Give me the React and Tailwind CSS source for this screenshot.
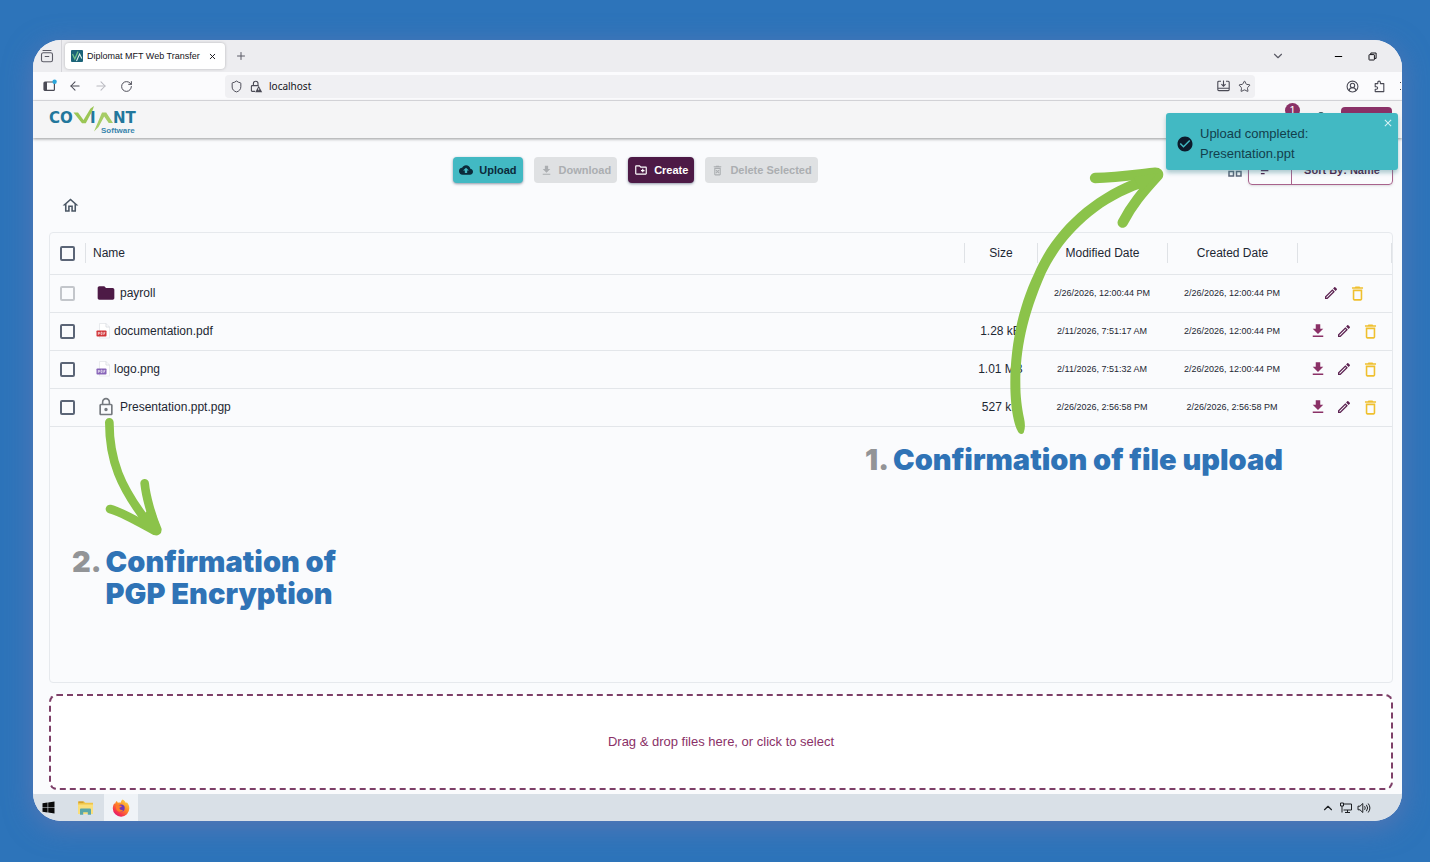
import React from "react";
import {
  MdCloudUpload,
  MdFileDownload,
  MdOutlineCreateNewFolder,
  MdOutlineDeleteForever,
  MdOutlineHome,
  MdOutlineEdit,
  MdDeleteOutline,
  MdLockOutline,
  MdFolder,
  MdCheckCircle,
  MdClose,
  MdGridView,
  MdSort,
  MdPerson,
  MdNotifications,
} from "react-icons/md";
import {
  ArrowLeft,
  ArrowRight,
  ChevronDown,
  ChevronUp,
  CircleUserRound,
  Minus,
  Plus,
  RotateCw,
  Shield,
  Star,
  X,
} from "lucide-react";

const files = [
  {
    name: "payroll",
    type: "folder",
    size: "",
    modified: "2/26/2026, 12:00:44 PM",
    created: "2/26/2026, 12:00:44 PM",
  },
  {
    name: "documentation.pdf",
    type: "pdf",
    size: "1.28 kB",
    modified: "2/11/2026, 7:51:17 AM",
    created: "2/26/2026, 12:00:44 PM",
  },
  {
    name: "logo.png",
    type: "png",
    size: "1.01 MB",
    modified: "2/11/2026, 7:51:32 AM",
    created: "2/26/2026, 12:00:44 PM",
  },
  {
    name: "Presentation.ppt.pgp",
    type: "pgp",
    size: "527 kB",
    modified: "2/26/2026, 2:56:58 PM",
    created: "2/26/2026, 2:56:58 PM",
  },
];

function TabBar() {
  return (
    <div className="flex h-8 items-center bg-[#ededf0] text-[#5b5b66]">
      <button aria-label="Recent tabs" className="flex h-8 w-[29px] items-center justify-center border-r border-[#d5d5da]">
        <svg width="14" height="14" viewBox="0 0 14 14" fill="none" stroke="currentColor" strokeWidth="1.1">
          <path d="M3 1.5h8" strokeLinecap="round" />
          <rect x="1.5" y="3.8" width="11" height="9" rx="1.8" />
          <path d="M5.2 7.5h3.6" strokeLinecap="round" />
        </svg>
      </button>
      <div className="ml-[3px] flex h-[26px] w-40 items-center rounded bg-white pl-1.5 pr-2 shadow-[0_0_3px_rgba(0,0,0,0.25)]">
        <svg width="12" height="12" viewBox="0 0 12 12" className="mr-1 shrink-0">
          <rect width="12" height="12" rx="1" fill="#1b6378" />
          <path d="M1.5 4l2.3 5L7 1.5" fill="none" stroke="#6fc08a" strokeWidth="1.3" />
          <path d="M5.5 11L8.6 4l2.2 4.5" fill="none" stroke="#d8efe6" strokeWidth="1.1" />
        </svg>
        <span className="flex-1 whitespace-nowrap text-[9px] leading-4 text-[#15141a]">
          Diplomat MFT Web Transfer
        </span>
        <button aria-label="Close tab">
          <X size={9} strokeWidth={2.5} className="text-[#15141a]" />
        </button>
      </div>
      <button aria-label="New tab" className="ml-2.5">
        <Plus size={12} strokeWidth={2} />
      </button>
      <button aria-label="List all tabs" className="ml-auto">
        <ChevronDown size={14} strokeWidth={2} />
      </button>
      <button aria-label="Minimize" className="ml-12">
        <Minus size={11} strokeWidth={2.4} className="text-black" />
      </button>
      <button aria-label="Restore" className="ml-6 mr-[25px]">
        <svg width="9" height="9" viewBox="0 0 9 9" fill="none" stroke="#15141a" strokeWidth="1">
          <rect x="1" y="2.6" width="5.4" height="5.4" rx="0.5" />
          <path d="M2.8 2.4V1h5.3v5.4H6.6" />
        </svg>
      </button>
    </div>
  );
}

function AddressBar() {
  return (
    <div className="flex h-[29px] items-center border-b border-[#e2e2e6] bg-[#fbfbfd] pl-2.5 text-[#4a4a55]">
      <button aria-label="Sidebar">
        <svg width="14" height="14" viewBox="0 0 14 14" fill="none">
          <rect x="1" y="3" width="10.4" height="8.4" rx="1" stroke="currentColor" strokeWidth="1.2" />
          <rect x="1" y="3" width="3" height="8.4" fill="currentColor" />
          <circle cx="11.6" cy="2.8" r="2.2" fill="#2ba7dc" />
        </svg>
      </button>
      <button aria-label="Back" className="ml-[11px]">
        <ArrowLeft size={14} strokeWidth={1.8} />
      </button>
      <button aria-label="Forward" className="ml-3 text-[#b9b9c0]" disabled>
        <ArrowRight size={14} strokeWidth={1.8} />
      </button>
      <button aria-label="Reload" className="ml-3">
        <RotateCw size={13} strokeWidth={1.8} />
      </button>
      <div className="ml-[92px] flex h-[23px] flex-1 items-center rounded bg-[#f0f0f3] pl-[5px] pr-1">
        <Shield size={13} strokeWidth={1.8} />
        <svg width="13" height="13" viewBox="0 0 13 13" fill="none" className="ml-[7px]">
          <path d="M3.4 5.6V3.6a2.3 2.3 0 014.6 0v2" stroke="currentColor" strokeWidth="1.1" />
          <path d="M5 11.4H2.2a.8.8 0 01-.8-.8V6.4c0-.4.4-.8.8-.8h6.4" stroke="currentColor" strokeWidth="1.1" />
          <path d="M8.7 5.8l3.5 6.4H5.2z" fill="currentColor" />
          <path d="M8.7 8.2v2" stroke="#f0f0f3" strokeWidth="0.9" />
        </svg>
        <input
          aria-label="Address"
          defaultValue="localhost"
          className="ml-1.5 min-w-0 flex-1 bg-transparent font-['Noto_Sans',sans-serif] text-[10px] text-[#15141a] outline-none"
        />
        <button aria-label="Install app">
          <svg width="13" height="12" viewBox="0 0 13 12" fill="none" stroke="currentColor" strokeWidth="1.1">
            <path d="M4 1.2H1.8a1 1 0 00-1 1v7.4a1 1 0 001 1h9.4a1 1 0 001-1V2.2a1 1 0 00-1-1H9" />
            <path d="M6.5.5v5.6M4.4 4.2l2.1 2 2.1-2M1 8.3h11" />
          </svg>
        </button>
        <button aria-label="Bookmark" className="ml-2">
          <Star size={13} strokeWidth={1.8} />
        </button>
      </div>
      <button aria-label="Account" className="ml-[91px]">
        <CircleUserRound size={13} strokeWidth={2} />
      </button>
      <button aria-label="Extensions" className="ml-3.5">
        <svg width="13" height="13" viewBox="0 0 13 13" fill="none" stroke="currentColor" strokeWidth="1.1" strokeLinejoin="round">
          <path d="M2.2 3.6h2.6V2.4a1.3 1.3 0 012.6 0v1.2h3.4v8H2.2V9.2h1.2a1.2 1.2 0 000-2.5H2.2z" />
        </svg>
      </button>
      <button aria-label="Menu" className="ml-3.5 mr-px h-2 w-px border-y border-[#4a4a55]" />
    </div>
  );
}

function Logo() {
  return (
    <svg width="89" height="28" viewBox="0 0 89 28" role="img" aria-label="Coviant Software">
      <g fill="#22779c" fontFamily="'DejaVu Sans', sans-serif" fontWeight="700" fontSize="15">
        <text x="0" y="17">CO</text>
        <text x="41" y="17">I</text>
        <text x="64" y="17">NT</text>
      </g>
      <text x="52" y="27" fill="#3a86ad" fontFamily="'Liberation Sans', sans-serif" fontWeight="700" fontSize="8">
        Software
      </text>
      <path d="M24.500 6.500h4.500l5.500 7.500L41.500 2.500 45 0 43.500 4.500 36.800 17.300h-3.800z" fill="#9bc655" />
      <path d="M45 25.500L53 6.600h4.200L64 17h-4.300L55.200 10.500 49.500 21z" fill="#a6cc66" />
    </svg>
  );
}

function AppHeader() {
  return (
    <header className="flex h-[37px] items-center bg-[#f5f5f6] pl-4 pr-2.5 shadow-[0_1px_3px_rgba(0,0,0,0.4)]">
      <Logo />
      <button aria-label="Notifications" className="relative ml-auto text-[#4d1a46]">
        <MdNotifications size={18} />
        <span className="absolute -top-2 left-2 flex h-[15px] w-[15px] items-center justify-center rounded-full bg-[#8a3167] text-[11px] text-white">
          1
        </span>
      </button>
      <button aria-label="Profile" className="ml-3.5 text-[#38565f]">
        <MdPerson size={24} />
      </button>
      <button className="ml-2 h-[26px] w-[51px] rounded bg-[#8a3167] text-[11px] font-bold text-white">
        Logout
      </button>
    </header>
  );
}

function Toolbar() {
  return (
    <div className="flex items-center">
      <div className="flex flex-1 justify-center gap-[11px] text-[11px] font-bold">
        <button className="flex h-[26px] items-center gap-1.5 rounded bg-[#42b9c3] px-1.5 text-[#0b2a3a] shadow-sm shadow-gray-400">
          <MdCloudUpload size={14} />
          Upload
        </button>
        <button disabled className="flex h-[26px] items-center gap-1.5 rounded bg-[#dfe1e3] px-1.5 text-[#abaeb1]">
          <MdFileDownload size={13} />
          Download
        </button>
        <button className="flex h-[26px] items-center gap-1.5 rounded bg-[#4d1a46] px-1.5 text-white shadow-sm shadow-gray-400">
          <MdOutlineCreateNewFolder size={14} />
          Create
        </button>
        <button disabled className="flex h-[26px] items-center gap-1.5 rounded bg-[#dfe1e3] px-1.5 text-[#abaeb1]">
          <MdOutlineDeleteForever size={13} />
          Delete Selected
        </button>
      </div>
      <button aria-label="Grid view" className="ml-1 mr-1 text-[#5b6577]">
        <MdGridView size={18} />
      </button>
      <div className="flex h-[30px] rounded border border-[#a8628c] text-[11px] font-bold text-[#4d1a46] shadow-sm">
        <button aria-label="Sort direction" className="flex w-[43px] items-center justify-center border-r border-[#a8628c] pr-2">
          <MdSort size={15} />
        </button>
        <button className="w-[100px]">Sort By: Name</button>
      </div>
    </div>
  );
}

function FileIcon({ type }) {
  if (type === "folder") return <MdFolder size={20} className="mr-1 text-[#4d1a46]" />;
  if (type === "pgp") return <MdLockOutline size={20} className="mr-1 text-[#75797f]" />;
  return (
    <svg width="15" height="16" viewBox="0 0 15 16" className="mr-[3px]">
      <path d="M3.500.5h6.500l3.500 3.500v11h-10z" fill="#fff" stroke="#e3e6ea" strokeWidth="0.800" />
      <path d="M10 .5v3.500h3.500" fill="none" stroke="#d5d9de" strokeWidth="0.800" />
      <rect x="0.500" y="7.500" width="10" height="6" rx="0.800" fill={type === "pdf" ? "#d13438" : "#8764b8"} />
      <path d="M2.300 9.200v2.700M2.300 9.500h1.300v1.200H2.300M5 9.200h1.100v2.400H5zM7.800 12V9.400h1.500M7.800 10.600h1.200" fill="none" stroke="#fff" strokeWidth="0.600" />
    </svg>
  );
}

const checkboxClass =
  "block h-[15px] w-[15px] appearance-none rounded-xs border-2 border-[#5b6577] checked:bg-[#4d1a46] disabled:border-[#c3c6cb]";

function FileTable() {
  return (
    <div className="flex-1 rounded border border-[#e6e9ed]">
      <table className="w-full table-fixed text-[12px] text-[#1d2733]">
        <colgroup>
          <col className="w-[35px]" />
          <col />
          <col className="w-[73px]" />
          <col className="w-[130px]" />
          <col className="w-[130px]" />
          <col className="w-[95px]" />
        </colgroup>
        <thead>
          <tr className="h-[41px] border-b border-[#e3e6ea]">
            <th className="p-0 pl-2.5">
              <input type="checkbox" aria-label="Select all" className={checkboxClass} />
            </th>
            <th className="p-0 text-left font-normal">
              <div className="border-l border-[#dfe2e6] pl-[7px] leading-5">Name</div>
            </th>
            <th className="p-0 font-normal">
              <div className="border-l border-[#dfe2e6] leading-5">Size</div>
            </th>
            <th className="p-0 font-normal">
              <div className="border-l border-[#dfe2e6] leading-5">Modified Date</div>
            </th>
            <th className="p-0 font-normal">
              <div className="border-l border-[#dfe2e6] leading-5">Created Date</div>
            </th>
            <th className="p-0">
              <div aria-label="Actions" className="h-5 border-x border-[#dfe2e6]" />
            </th>
          </tr>
        </thead>
        <tbody>
          {files.map((file) => (
            <tr key={file.name} className="h-[38px] border-b border-[#e3e6ea]">
              <td className="p-0 pl-2.5">
                <input
                  type="checkbox"
                  aria-label={`Select ${file.name}`}
                  disabled={file.type === "folder"}
                  className={checkboxClass}
                />
              </td>
              <td className="p-0 pl-[11px]">
                <div className="flex items-center">
                  <FileIcon type={file.type} />
                  {file.name}
                </div>
              </td>
              <td className="p-0 text-center">{file.size}</td>
              <td className="p-0 text-center text-[9px] leading-4">{file.modified}</td>
              <td className="p-0 text-center text-[9px] leading-4">{file.created}</td>
              <td className="p-0">
                <div className="flex items-center justify-center gap-[9px]">
                  {file.type !== "folder" && (
                    <button aria-label={`Download ${file.name}`} className="text-[#8a3167]">
                      <MdFileDownload size={18} />
                    </button>
                  )}
                  <button aria-label={`Rename ${file.name}`} className="text-[#5d2352]">
                    <MdOutlineEdit size={16} />
                  </button>
                  <button aria-label={`Delete ${file.name}`} className="text-[#efc02f]">
                    <MdDeleteOutline size={19} />
                  </button>
                </div>
              </td>
            </tr>
          ))}
        </tbody>
      </table>
    </div>
  );
}

function Taskbar() {
  return (
    <footer className="flex h-[27px] items-center bg-[#d9e0e7]">
      <button aria-label="Start" className="ml-[9px]">
        <svg width="13" height="13" viewBox="0 0 13 13" fill="#0a0a0a">
          <path d="M.5 2.200L5.600 1.500v4.700H.5zM6.200 1.400L12.500.5v5.700H6.200zM.5 6.800h5.100v4.700L.5 10.800zM6.200 6.800h6.300v5.700l-6.300-.9z" />
        </svg>
      </button>
      <button aria-label="File Explorer" className="ml-[22px]">
        <svg width="17" height="16" viewBox="0 0 17 16">
          <path d="M1 1.500h6l1.200 1.300H16V14H1z" fill="#f0c548" />
          <path d="M1 4.500h15V14H1z" fill="#fadf7c" />
          <path d="M1.500 1.500h5v1.300h-5z" fill="#c99328" />
          <path d="M3 14.800V9.600c0-.7.500-1.200 1.200-1.200h8.600c.7 0 1.200.5 1.200 1.200v5.200h-3.200v-2.600H6.200v2.600z" fill="#5aa6a8" />
        </svg>
      </button>
      <button aria-label="Firefox" className="ml-2.5 flex h-[27px] w-[34px] items-center justify-center bg-[#eff3f7]">
        <svg width="18" height="18" viewBox="0 0 18 18">
          <defs>
            <linearGradient id="fox" x1="0.9" y1="0" x2="0.2" y2="1">
              <stop offset="0" stopColor="#ffe14a" />
              <stop offset="0.45" stopColor="#ff8a25" />
              <stop offset="0.8" stopColor="#f5324f" />
              <stop offset="1" stopColor="#d6157e" />
            </linearGradient>
          </defs>
          <path d="M10.500.5c2 1 3 2.300 3.500 3.700.5-.2.600-.7.600-1.200C16.500 4.800 17.300 7 17.300 9.300a8.200 8.200 0 01-16.500.2c0-2.300.7-4 1.600-5.500.1.600.3 1 .6 1.300.2-1.300 1-2.600 2-3.500 0 .9.400 1.600 1 2 1-.4 2-.5 3-.2-.2-1 .4-2.400 1.500-3.100z" fill="url(#fox)" />
          <circle cx="9.200" cy="9" r="3.500" fill="#7038b8" />
          <path d="M4 6.500c1.500-.9 3-.6 4.200.1 1 .1 1.500.5 1.600 1-.6.700-1.700.8-2.400 1.500.3 1.600 2 2.300 3.800 1.600-1 2.500-5 2.700-6.500.2-.9-1.400-1.100-3-.7-4.400z" fill="#ff7a2a" />
        </svg>
      </button>
      <div className="ml-auto mr-[31px] flex items-center gap-1 text-[#1c1f23]">
        <ChevronUp size={14} strokeWidth={2} />
        <svg width="14" height="12" viewBox="0 0 14 12" fill="none" stroke="currentColor">
          <path d="M4.500 2H12.500v6H4.500" />
          <path d="M1.500 1h3v3h-3zM3 4v6.500M6 10.500h5M8.500 8v2.500" />
        </svg>
        <svg width="14" height="12" viewBox="0 0 14 12" fill="none" stroke="currentColor">
          <path d="M1 4.200h2L5.800 1.500v9L3 7.800H1z" />
          <path d="M7.600 4.200q1.300 1.800 0 3.600M9.400 2.800q2.500 3.200 0 6.400M11.200 1.500q3.400 4.500 0 9" />
        </svg>
      </div>
    </footer>
  );
}

function Toast() {
  return (
    <div
      role="status"
      className="absolute right-8 top-[113px] flex h-[57px] w-[232px] items-center rounded-[3px] bg-[#42b9c3] pl-2.5 text-[13px] leading-5 text-[#12404d] shadow-[0_3px_4px_rgba(60,130,140,0.4)]"
    >
      <MdCheckCircle size={18} className="mr-1.5 mt-1 text-[#0c1a2b]" />
      <p className="mt-1">
        Upload completed:
        <br />
        Presentation.ppt
      </p>
      <button aria-label="Dismiss" className="absolute right-1 top-1 text-[#d9f3f5]">
        <MdClose size={12} />
      </button>
    </div>
  );
}

// Callout arrows and captions drawn over the window
function Annotations() {
  return (
    <>
      <svg className="absolute right-[265px] top-[165px]" width="160" height="272" viewBox="495 45 480 816">
        <g fill="#8bc34a">
          <path d="M900 80C760 130 640 235 583 370C530 480 511 600 511 700C511 770 522 830 537 849Q545 856 551 848Q558 832 552 805C545 770 541 740 541 700C541 600 560 500 617 370C670 260 770 160 905 114Z" />
          <path
            d="M765 84C830 83 890 74 946 68Q956 68 954 76C905 130 875 165 848 218"
            fill="none"
            stroke="#8bc34a"
            strokeWidth="31"
            strokeLinecap="round"
            strokeLinejoin="round"
          />
          <path d="M880 82L952 70L905 125L895 112Z" />
        </g>
      </svg>
      <svg className="absolute left-[100px] top-[415px]" width="65" height="123" viewBox="150 75 195 369">
        <g fill="none" stroke="#8bc34a" strokeWidth="26" strokeLinecap="round" strokeLinejoin="round">
          <path d="M178 97C178 210 210 290 295 400" />
          <path d="M180 357C220 367 270 400 316 423Q322 425 322 419C305 380 288 320 284 280" />
          <path d="M280 394L320 420L302 370Z" fill="#8bc34a" />
        </g>
      </svg>
      <p className="absolute right-[147px] top-[444px] flex gap-1 whitespace-nowrap font-['Inter',sans-serif] text-[29px] font-black leading-8 text-[#2f73b6]">
        <span className="text-[#929497]">1.</span>
        <span>Confirmation of file upload</span>
      </p>
      <p className="absolute left-[72px] top-[546px] flex gap-1 whitespace-nowrap font-['Inter',sans-serif] text-[29px] font-black leading-8 text-[#2f73b6]">
        <span className="text-[#929497]">2.</span>
        <span>
          Confirmation of
          <br />
          PGP Encryption
        </span>
      </p>
    </>
  );
}

function App() {
  return (
    <div className="relative flex min-h-screen bg-[#2d74ba] pb-[41px] pl-[33px] pr-7 pt-10 font-['Liberation_Sans',sans-serif]">
      <div className="flex flex-1 flex-col overflow-hidden rounded-[28px] bg-[#fafbfd] shadow-[0_6px_28px_rgba(120,120,175,0.55)]">
        <TabBar />
        <AddressBar />
        <AppHeader />
        <main className="flex flex-1 flex-col pb-1 pl-4 pr-[9px] pt-[17px]">
          <Toolbar />
          <nav className="flex h-[47px] items-start pl-3 pt-[11px]">
            <a href="#home" aria-label="Home" className="text-[#4c5866]">
              <MdOutlineHome size={19} />
            </a>
          </nav>
          <FileTable />
          <button className="mt-[11px] h-24 rounded-lg border-2 border-dashed border-[#7d3f68] bg-white text-[13px] text-[#8a3167]">
            Drag &amp; drop files here, or click to select
          </button>
        </main>
        <Taskbar />
      </div>
      <Annotations />
      <Toast />
    </div>
  );
}

export default App;
